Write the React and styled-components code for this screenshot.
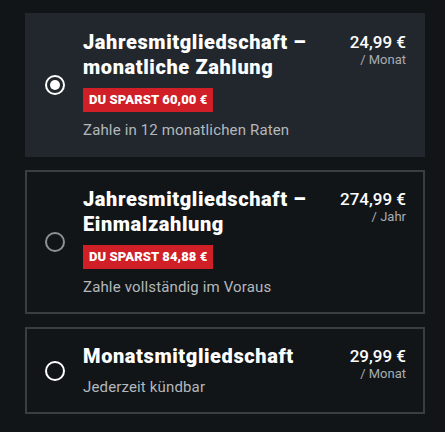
import styled, { createGlobalStyle } from 'styled-components';

const GlobalStyle = createGlobalStyle`
  html, body {
    margin: 0;
    background: #111518;
    font-family: Roboto, "Liberation Sans", sans-serif;
  }
`;

const plans = [
  {
    title: 'Jahresmitgliedschaft – monatliche Zahlung',
    badge: 'DU SPARST 60,00 €',
    note: 'Zahle in 12 monatlichen Raten',
    price: '24,99 €',
    unit: '/ Monat',
    selected: true,
  },
  {
    title: 'Jahresmitgliedschaft – Einmalzahlung',
    badge: 'DU SPARST 84,88 €',
    note: 'Zahle vollständig im Voraus',
    price: '274,99 €',
    unit: '/ Jahr',
    dim: true,
  },
  {
    title: 'Monatsmitgliedschaft',
    note: 'Jederzeit kündbar',
    price: '29,99 €',
    unit: '/ Monat',
  },
];

export default function App() {
  return (
    <Page>
      <GlobalStyle />
      {plans.map((p) => (
        <Card key={p.title} $selected={p.selected}>
          <Radio $selected={p.selected} $dim={p.dim} />
          <Body>
            <Title>{p.title}</Title>
            {p.badge && <Badge>{p.badge}</Badge>}
            <Note>{p.note}</Note>
          </Body>
          <Price>
            <span className='amount'>{p.price}</span>
            <span className='unit'>{p.unit}</span>
          </Price>
        </Card>
      ))}
    </Page>
  );
}

const Page = styled.div`
  padding: 13px 20px 18px 25px;
  display: flex;
  flex-direction: column;
  gap: 13px;
`;

const Card = styled.div`
  display: flex;
  align-items: flex-start;
  padding: 15px 17px 15px 18px;
  border: 2px solid ${(p) => (p.$selected ? '#22272d' : '#393e43')};
  background: ${(p) => (p.$selected ? '#22272d' : '#111518')};
`;

const Radio = styled.span`
  flex: none;
  align-self: center;
  width: 20px;
  height: 20px;
  box-sizing: border-box;
  border-radius: 50%;
  border: 2px solid ${(p) => (p.$dim ? '#8d9195' : '#ffffff')};
  display: flex;
  align-items: center;
  justify-content: center;
  margin-right: 18px;
  &::after {
    content: '';
    width: 10px;
    height: 10px;
    border-radius: 50%;
    background: #fff;
    display: ${(p) => (p.$selected ? 'block' : 'none')};
  }
`;

const Body = styled.div`
  flex: 1;
  display: flex;
  flex-direction: column;
  align-items: flex-start;
  gap: 8px;
`;

const Title = styled.div`
  color: #fff;
  font-size: 20px;
  font-weight: 900;
  line-height: 25px;
  letter-spacing: 0.6px;
  max-width: 240px;
`;

const Badge = styled.span`
  background: #d01f26;
  color: #fff;
  font-size: 13px;
  font-weight: 900;
  line-height: 24px;
  letter-spacing: 0.1px;
  padding: 0 6px;
`;

const Note = styled.div`
  color: #b4b8bc;
  font-size: 15px;
  line-height: 20px;
  letter-spacing: 0.15px;
`;

const Price = styled.div`
  display: flex;
  flex-direction: column;
  align-items: flex-end;
  padding-top: 2px;
  .amount {
    color: #fff;
    font-size: 17px;
    font-weight: 500;
    line-height: 20px;
  }
  .unit {
    color: #a9adb1;
    font-size: 13px;
    line-height: 16px;
  }
`;
